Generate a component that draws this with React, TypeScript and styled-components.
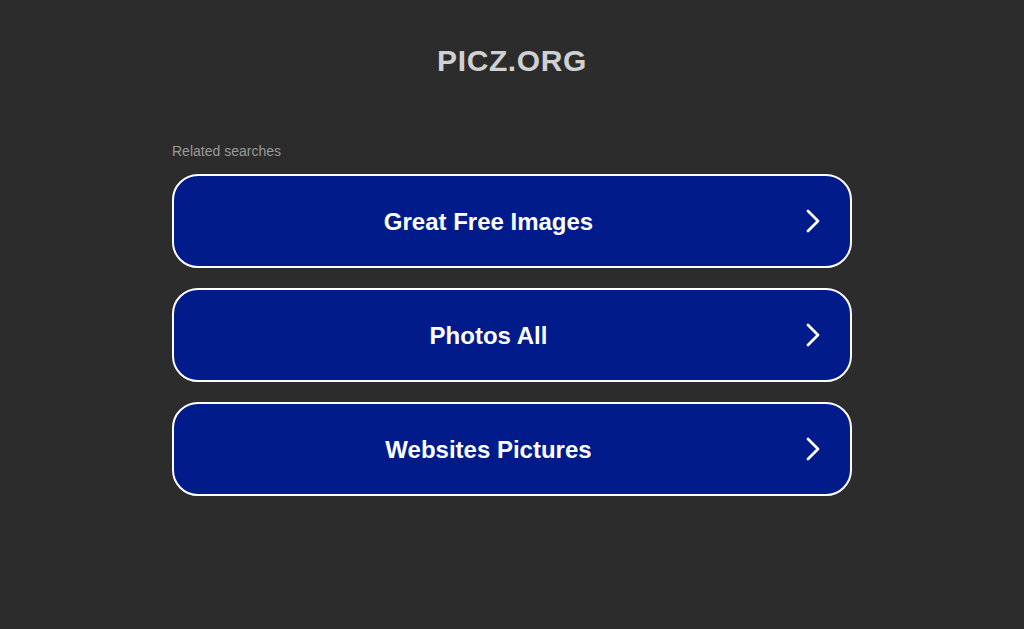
import styled, { createGlobalStyle } from "styled-components";

const GlobalStyle = createGlobalStyle`
    html, body {
        margin: 0;
        padding: 0;
        background: #2c2c2c;
        font-family: "Liberation Sans", Arial, sans-serif;
    }
`;

const Page = styled.div`
    display: flex;
    flex-direction: column;
    align-items: center;
    min-height: 629px;
`;

const Title = styled.h1`
    margin: 44px 0 0;
    font-size: 30px;
    line-height: 34px;
    font-weight: 700;
    letter-spacing: 0.6px;
    color: #d0d0d0;
`;

const Results = styled.div`
    width: 680px;
    margin-top: 64px;
    display: flex;
    flex-direction: column;
`;

const Caption = styled.div`
    font-size: 14px;
    line-height: 18px;
    color: #9a9a9a;
    margin-bottom: 14px;
`;

const List = styled.div`
    display: flex;
    flex-direction: column;
    gap: 20px;
`;

const LinkButton = styled.a`
    display: flex;
    align-items: center;
    height: 94px;
    box-sizing: border-box;
    border: 2px solid #ffffff;
    border-radius: 26px;
    background: #011b8a;
    color: #ffffff;
    text-decoration: none;
    cursor: pointer;
`;

const Label = styled.span`
    flex: 1;
    text-align: center;
    font-size: 24px;
    font-weight: 700;
    padding-top: 2px;
`;

const Chevron = styled.svg`
    width: 20px;
    height: 24px;
    margin-right: 27px;
    flex-shrink: 0;
`;

const ArrowIcon = () => (
    <Chevron viewBox="0 0 20 24">
        <polyline
            points="5,2 15,12 5,22"
            fill="none"
            stroke="#ffffff"
            strokeWidth="2.8"
            strokeLinecap="round"
            strokeLinejoin="round"
        />
    </Chevron>
);

const searches = ["Great Free Images", "Photos All", "Websites Pictures"];

const App = () => {
    return (
        <>
            <GlobalStyle />
            <Page>
                <Title>PICZ.ORG</Title>
                <Results>
                    <Caption>Related searches</Caption>
                    <List>
                        {searches.map((s) => (
                            <LinkButton key={s}>
                                <Label>{s}</Label>
                                <ArrowIcon />
                            </LinkButton>
                        ))}
                    </List>
                </Results>
            </Page>
        </>
    );
};

export default App;
